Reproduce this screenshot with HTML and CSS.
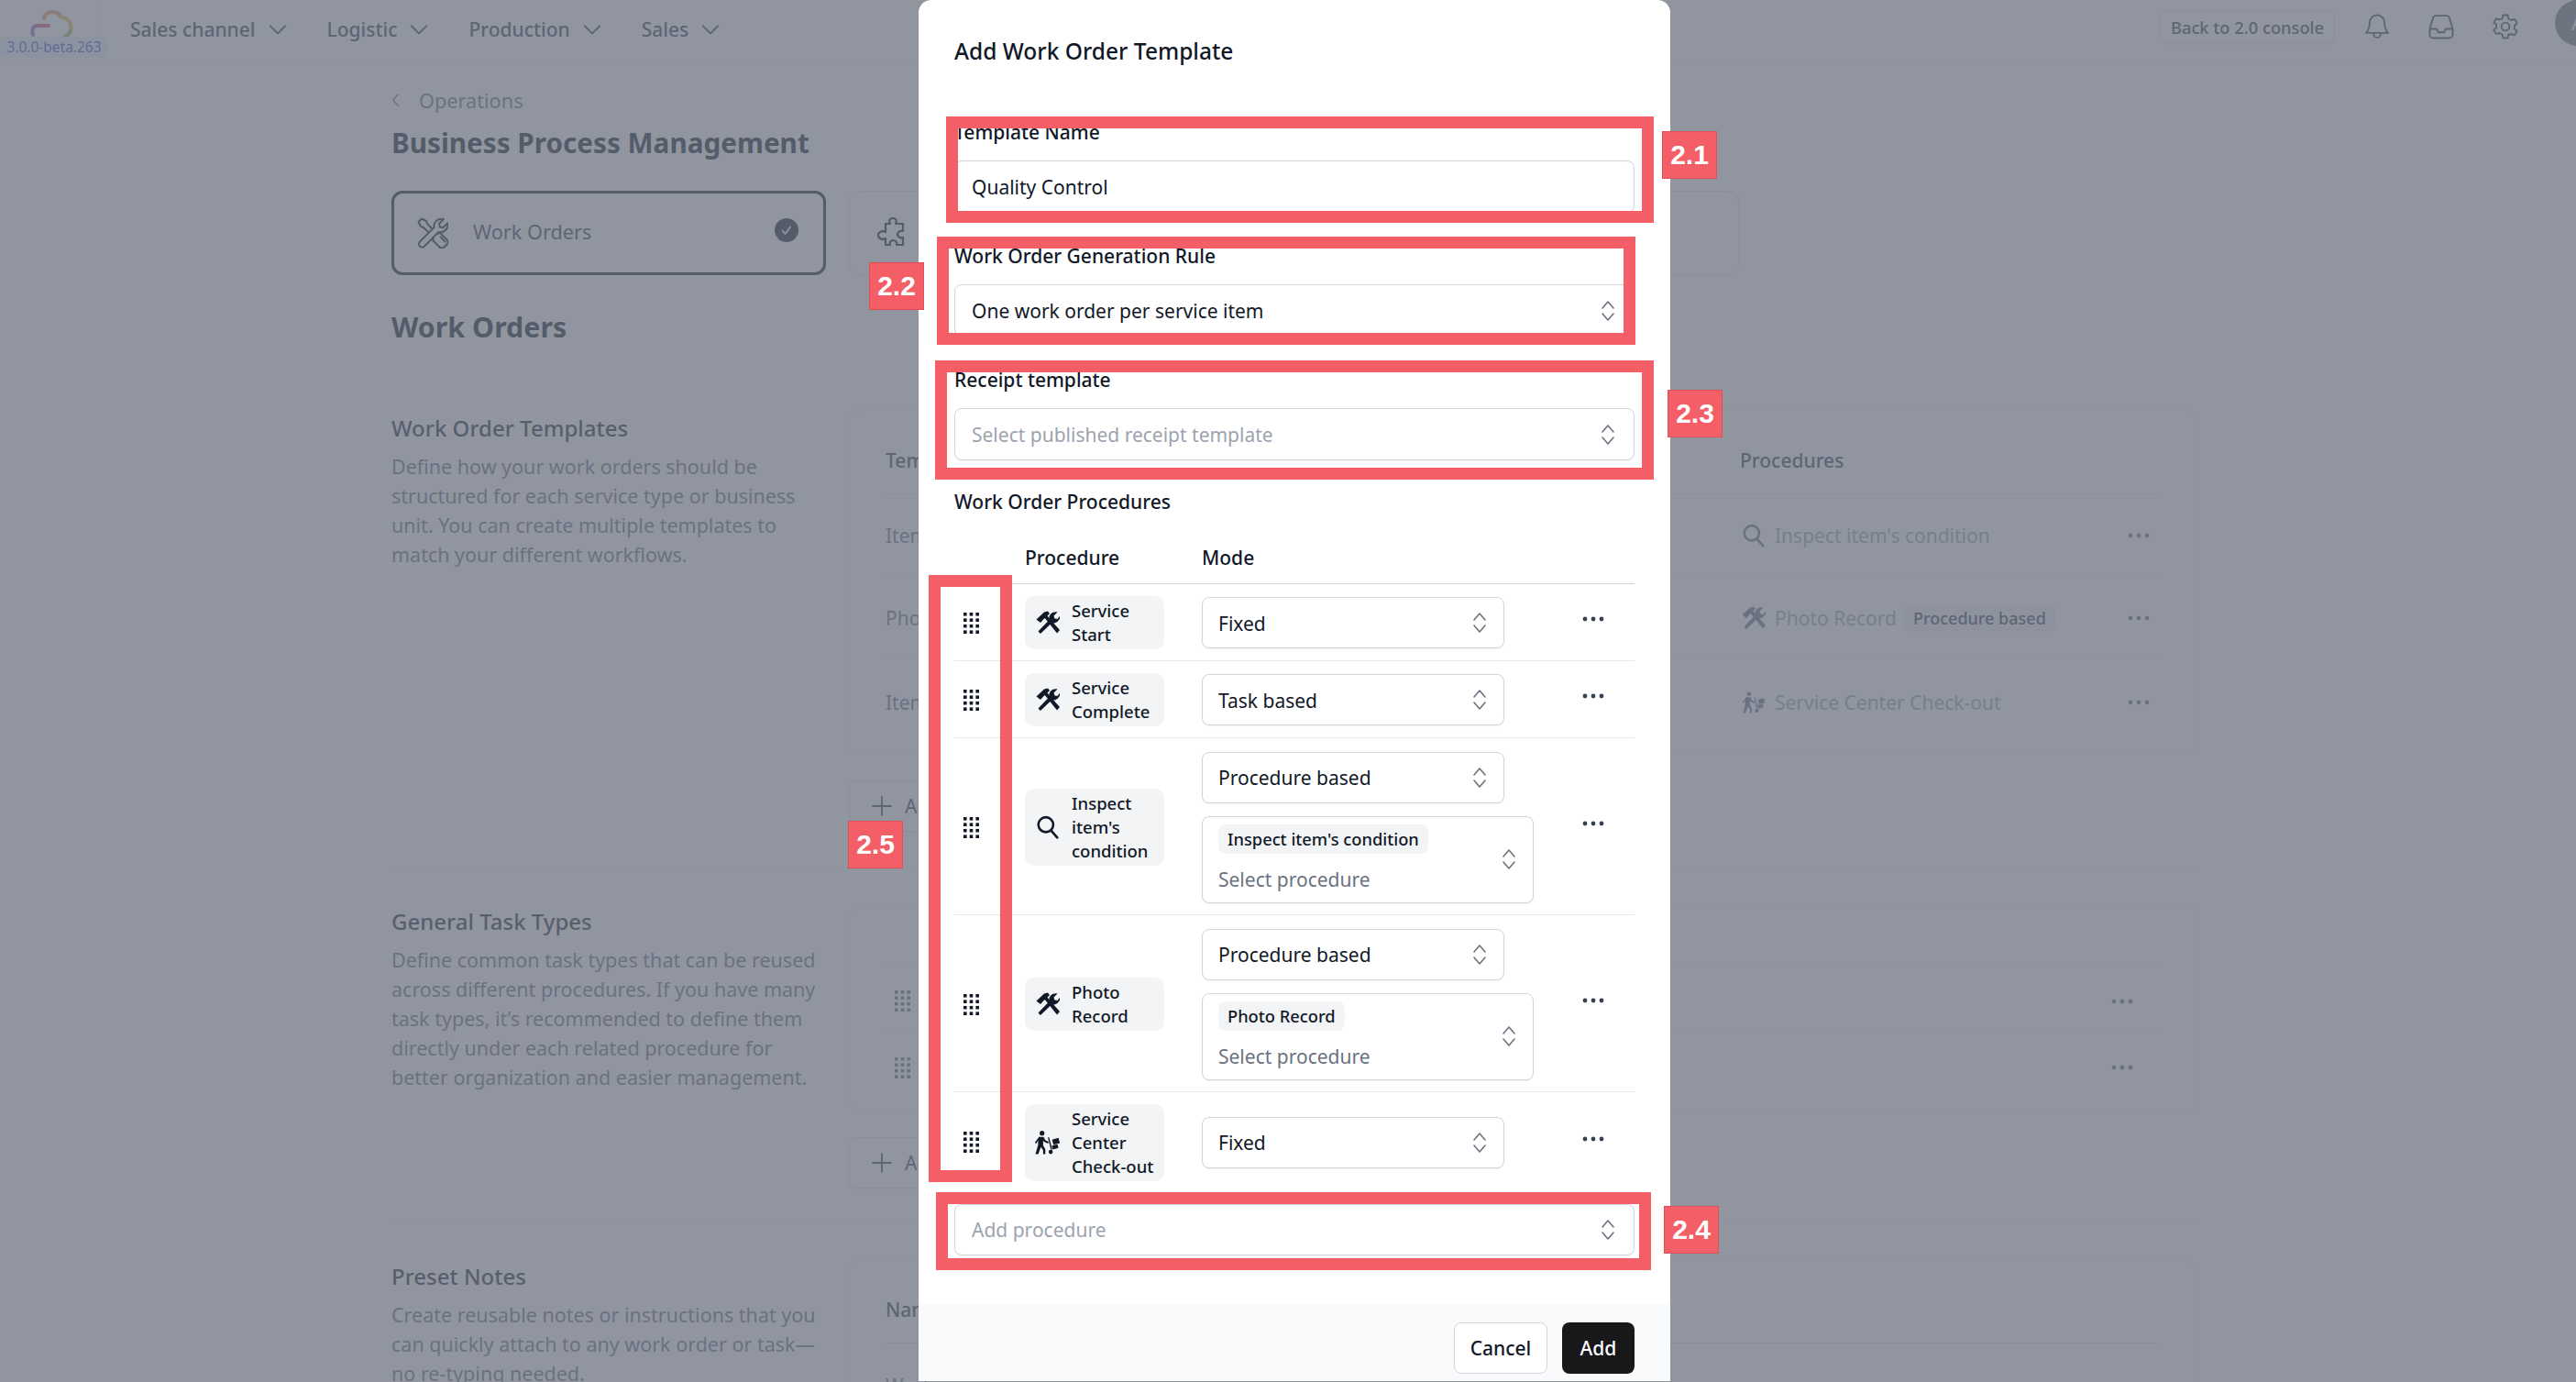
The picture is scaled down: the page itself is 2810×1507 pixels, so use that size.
FILE: index.html
```html
<!DOCTYPE html>
<html lang="en">
<head>
<meta charset="UTF-8">
<title>Add Work Order Template</title>
<link rel="stylesheet" href="styles.css">
</head>
<body>
<svg class="defs" width="0" height="0">
  <symbol id="updown" viewBox="0 0 16 24"><path d="M2 9 8 2l6 7M2 15l6 7 6-7" fill="none" stroke="#6b7280" stroke-width="1.6" stroke-linecap="round" stroke-linejoin="round"/></symbol>
  <symbol id="grip" viewBox="0 0 17 23"><g fill="currentColor"><rect x="0" y="0" width="3.6" height="3.6"/><rect x="6.7" y="0" width="3.6" height="3.6"/><rect x="13.4" y="0" width="3.6" height="3.6"/><rect x="0" y="6.4" width="3.6" height="3.6"/><rect x="6.7" y="6.4" width="3.6" height="3.6"/><rect x="13.4" y="6.4" width="3.6" height="3.6"/><rect x="0" y="12.9" width="3.6" height="3.6"/><rect x="6.7" y="12.9" width="3.6" height="3.6"/><rect x="13.4" y="12.9" width="3.6" height="3.6"/><rect x="0" y="19.4" width="3.6" height="3.6"/><rect x="6.7" y="19.4" width="3.6" height="3.6"/><rect x="13.4" y="19.4" width="3.6" height="3.6"/></g></symbol>
  <symbol id="dots" viewBox="0 0 24 6"><g fill="currentColor"><circle cx="3" cy="3" r="2.4"/><circle cx="12" cy="3" r="2.4"/><circle cx="21" cy="3" r="2.4"/></g></symbol>
  <symbol id="tools" viewBox="0 0 26 26"><g fill="currentColor"><path d="M.5 9.500 9 1.500 13 .5 15 3l-2.500 2.500L14 7.500 11.500 10l-2-2L5 13z"/><path d="M11 9.500 13.500 7 26 21l-3 3.500z"/><path d="M2.500 22.500 14.500 10C13.500 5 17.500.5 23.500 1.500l-4 4 1 3 3 .5 3-4C27 10.500 22 14.500 17 13.500L5 25z"/></g></symbol>
  <symbol id="search" viewBox="0 0 24 24"><path fill="none" stroke="currentColor" stroke-width="2.400" stroke-linecap="round" d="M15.500 15.500 21.500 22.500M17.500 9.500a7.500 7.500 0 1 1-15 0 7.500 7.500 0 0 1 15 0z"/></symbol>
  <symbol id="walker" viewBox="0 0 30 27"><g fill="currentColor"><circle cx="9" cy="2.800" r="2.700"/><path d="M5.500 7h5l2.500 4 3.500 1.500-.8 2-4.500-2-1-1.500v5.500l2.500 4.500v5.500h-2.500v-4.500l-2.500-3.500-3 8H1.500L4.500 16v-5l-2 3.500L.8 13.500z"/><path d="M15.500 7.500h1.500l3.500 13.500-1.500.5z"/><rect x="21" y="9" width="7.500" height="6" transform="rotate(-15 24.700 12)"/><rect x="20.500" y="16" width="6.500" height="4.500" transform="rotate(-15 23.700 18)"/><circle cx="18.800" cy="24" r="2.400"/></g></symbol>
  <symbol id="chev" viewBox="0 0 16 16"><path d="M2.500 5.500 8 11l5.500-5.500" fill="none" stroke="currentColor" stroke-width="1.200" stroke-linecap="round" stroke-linejoin="round"/></symbol>
  <symbol id="plus" viewBox="0 0 24 24"><path d="M12 2v20M2 12h20" stroke="currentColor" stroke-width="1.800" stroke-linecap="round"/></symbol>
</svg>

<div class="page">
  <header class="topbar">
    <div class="logo">
      <svg class="logo-cloud" viewBox="0 0 48 30" fill="none" stroke-width="4" stroke-linecap="round"><path d="M3 27C1 22 3 17 8 17" stroke="#8f6fc0"/><path d="M8 17H20" stroke="#e0567f"/><path d="M15 9C17 1 29-1 34 8" stroke="#e89a5a"/><path d="M34 8C42 8 46 16 44 22" stroke="#d9c050"/><path d="M44 22C43 26 41 28 38 29" stroke="#8fc46a"/></svg>
      <span class="version">3.0.0-beta.263</span>
    </div>
    <nav class="menu">
      <a>Sales channel <svg class="chev"><use href="#chev"/></svg></a>
      <a>Logistic <svg class="chev"><use href="#chev"/></svg></a>
      <a>Production <svg class="chev"><use href="#chev"/></svg></a>
      <a>Sales <svg class="chev"><use href="#chev"/></svg></a>
    </nav>
    <div class="top-right">
      <button class="console-btn">Back to 2.0 console</button>
      <svg class="top-icon" viewBox="0 0 24 24" fill="none" stroke="currentColor" stroke-width="1.500" stroke-linejoin="round"><path d="M12 2a6.500 6.500 0 0 0-6.500 6.500c0 5-1.500 7-3 9h19c-1.500-2-3-4-3-9A6.500 6.500 0 0 0 12 2z"/><path d="M9 17.500v1a3 3 0 0 0 6 0v-1"/></svg>
      <svg class="top-icon" viewBox="0 0 24 24" fill="none" stroke="currentColor" stroke-width="1.500" stroke-linejoin="round"><path d="M2 14v5a3 3 0 0 0 3 3h14a3 3 0 0 0 3-3v-5l-3-10a2.500 2.500 0 0 0-2-1.500H7A2.500 2.500 0 0 0 5 4z"/><path d="M2 14h6l1.500 3h5l1.500-3h6"/></svg>
      <svg class="top-icon gear" viewBox="0 0 24 24" fill="none" stroke="currentColor" stroke-width="1.500" stroke-linejoin="round"><path d="M10 2h4l.7 3 2.400 1.400 3-.9 2 3.500-2.200 2.100v2.800l2.200 2.100-2 3.500-3-.9L14.700 19 14 22h-4l-.7-3-2.400-1.400-3 .9-2-3.500 2.200-2.100v-2.800L1.900 8.500l2-3.500 3 .9L9.300 5z"/><circle cx="12" cy="12" r="3.500"/></svg>
      <div class="avatar">A</div>
    </div>
  </header>

  <main class="content">
    <div class="crumb"><svg class="crumb-back" viewBox="0 0 10 18"><path d="M8 2 2 9l6 7" fill="none" stroke="currentColor" stroke-width="1.500" stroke-linecap="round" stroke-linejoin="round"/></svg>Operations</div>
    <h1 class="page-title">Business Process Management</h1>

    <div class="cards">
      <div class="tab-card active">
        <svg class="tab-icon" viewBox="0 0 34 34" stroke="currentColor" stroke-width="2" stroke-linejoin="round" fill="#fff"><path d="M1.500 5 5 1.500l5 2.500 1 3L22 18l3-1 7.500 7.500a3.500 3.500 0 0 1 0 5l-3 3a3.500 3.500 0 0 1-5 0L17 25l1-3L7 11l-3-1z"/><path d="M25 21l6 6"/><path d="M3 26.500 18.500 11C17.500 5.500 22.500.5 29 2l-5 5 .8 3.500 3.500.8 5-5C34.500 12.500 29 17.500 23.500 16L8 31.500a3.500 3.500 0 0 1-5-5z"/></svg>
        <span class="tab-name">Work Orders</span>
        <span class="tab-check"><svg viewBox="0 0 16 16"><path d="M3.500 8.500 6.500 12 12 4.500" fill="none" stroke="#fff" stroke-width="1.800" stroke-linecap="round" stroke-linejoin="round"/></svg></span>
      </div>
      <div class="tab-card">
        <svg class="tab-icon" viewBox="0 0 34 34" fill="none" stroke="currentColor" stroke-width="2.200" stroke-linejoin="round"><path d="M9 7h5c-2-4 0-6 3-6s5 2 3 6h8v8c-3-1-6 1-6 3.500s3 4.500 6 3.500v8h-7c1-3-1-5-3.500-5s-4.500 2-3.500 5H9v-7c-4 2-8 0-8-3.500s4-5.500 8-3.500z"/></svg>
      </div>
      <div class="tab-card"></div>
    </div>

    <h2 class="section-head">Work Orders</h2>

    <section class="setting first">
      <div class="setting-text">
        <h3>Work Order Templates</h3>
        <p>Define how your work orders should be structured for each service type or business unit. You can create multiple templates to match your different workflows.</p>
      </div>
      <div class="setting-body">
        <div class="panel templates">
          <div class="t-row t-head"><span>Template</span><span class="t-proc">Procedures</span></div>
          <div class="t-row"><span>Item</span><span class="t-proc"><svg class="t-icon"><use href="#search"/></svg><em>Inspect item's condition</em></span><svg class="t-dots"><use href="#dots"/></svg></div>
          <div class="t-row"><span>Photo</span><span class="t-proc"><svg class="t-icon"><use href="#tools"/></svg><em>Photo Record</em><b class="t-tag">Procedure based</b></span><svg class="t-dots"><use href="#dots"/></svg></div>
          <div class="t-row"><span>Item</span><span class="t-proc"><svg class="t-icon"><use href="#walker"/></svg><em>Service Center Check-out</em></span><svg class="t-dots"><use href="#dots"/></svg></div>
        </div>
        <button class="add-btn"><svg class="add-plus"><use href="#plus"/></svg>Add</button>
      </div>
    </section>

    <section class="setting second">
      <div class="setting-text">
        <h3>General Task Types</h3>
        <p>Define common task types that can be reused across different procedures. If you have many task types, it’s recommended to define them directly under each related procedure for better organization and easier management.</p>
      </div>
      <div class="setting-body">
        <div class="panel tasks">
          <div class="task-head"></div>
          <div class="task-row"><svg class="task-grip"><use href="#grip"/></svg><svg class="t-dots"><use href="#dots"/></svg></div>
          <div class="task-row"><svg class="task-grip"><use href="#grip"/></svg><svg class="t-dots"><use href="#dots"/></svg></div>
        </div>
        <button class="add-btn"><svg class="add-plus"><use href="#plus"/></svg>Add</button>
      </div>
    </section>

    <section class="setting">
      <div class="setting-text">
        <h3>Preset Notes</h3>
        <p>Create reusable notes or instructions that you can quickly attach to any work order or task—no re-typing needed.</p>
      </div>
      <div class="setting-body">
        <div class="panel notes">
          <div class="t-row t-head"><span>Name</span></div>
          <div class="t-row"><span>Wash</span></div>
        </div>
      </div>
    </section>
  </main>
</div>

<div class="overlay"></div>

<div class="modal">
  <h2 class="modal-title">Add Work Order Template</h2>
  <div class="modal-body">
    <div class="field">
      <label>Template Name</label>
      <div class="control">Quality Control</div>
    </div>
    <div class="field">
      <label>Work Order Generation Rule</label>
      <div class="control">One work order per service item<svg class="updown"><use href="#updown"/></svg></div>
    </div>
    <div class="field">
      <label>Receipt template</label>
      <div class="control placeholder">Select published receipt template<svg class="updown"><use href="#updown"/></svg></div>
    </div>

    <div class="proc-title">Work Order Procedures</div>
    <div class="proc-head"><span>Procedure</span><span>Mode</span></div>

    <div class="proc-row">
      <svg class="grip"><use href="#grip"/></svg>
      <div class="chip"><svg class="chip-icon"><use href="#tools"/></svg><span>Service Start</span></div>
      <div class="modes"><div class="control mode">Fixed<svg class="updown"><use href="#updown"/></svg></div></div>
      <svg class="more"><use href="#dots"/></svg>
    </div>
    <div class="proc-row">
      <svg class="grip"><use href="#grip"/></svg>
      <div class="chip"><svg class="chip-icon"><use href="#tools"/></svg><span>Service Complete</span></div>
      <div class="modes"><div class="control mode">Task based<svg class="updown"><use href="#updown"/></svg></div></div>
      <svg class="more"><use href="#dots"/></svg>
    </div>
    <div class="proc-row tall">
      <svg class="grip"><use href="#grip"/></svg>
      <div class="chip"><svg class="chip-icon"><use href="#search"/></svg><span>Inspect item's condition</span></div>
      <div class="modes">
        <div class="control mode">Procedure based<svg class="updown"><use href="#updown"/></svg></div>
        <div class="control multi"><div class="multi-list"><span class="tag">Inspect item's condition</span><span class="multi-hint">Select procedure</span></div><svg class="updown"><use href="#updown"/></svg></div>
      </div>
      <svg class="more"><use href="#dots"/></svg>
    </div>
    <div class="proc-row tall">
      <svg class="grip"><use href="#grip"/></svg>
      <div class="chip"><svg class="chip-icon"><use href="#tools"/></svg><span>Photo Record</span></div>
      <div class="modes">
        <div class="control mode">Procedure based<svg class="updown"><use href="#updown"/></svg></div>
        <div class="control multi"><div class="multi-list"><span class="tag">Photo Record</span><span class="multi-hint">Select procedure</span></div><svg class="updown"><use href="#updown"/></svg></div>
      </div>
      <svg class="more"><use href="#dots"/></svg>
    </div>
    <div class="proc-row last">
      <svg class="grip"><use href="#grip"/></svg>
      <div class="chip"><svg class="chip-icon wide"><use href="#walker"/></svg><span>Service Center Check-out</span></div>
      <div class="modes"><div class="control mode">Fixed<svg class="updown"><use href="#updown"/></svg></div></div>
      <svg class="more"><use href="#dots"/></svg>
    </div>

    <div class="control placeholder add-proc">Add procedure<svg class="updown"><use href="#updown"/></svg></div>
  </div>
  <div class="modal-foot">
    <button class="btn-cancel">Cancel</button>
    <button class="btn-add">Add</button>
  </div>
</div>

<!-- annotations drawn on the screenshot -->
<div class="mark m21"></div>
<div class="mark m22"></div>
<div class="mark m23"></div>
<div class="mark m24"></div>
<div class="mark m25"></div>
<div class="badge b21">2.1</div>
<div class="badge b22">2.2</div>
<div class="badge b23">2.3</div>
<div class="badge b24">2.4</div>
<div class="badge b25">2.5</div>
</body>
</html>
```

FILE: styles.css
```css
* {
  box-sizing: border-box;
}
html, body {
  margin: 0;
  height: 1507px;
  overflow: hidden;
}
body {
  font-family: "Noto Sans", "Open Sans", sans-serif;
  font-size: 21px;
  color: #111827;
  background: #fff;
  position: relative;
}
.defs {
  position: absolute;
}
button {
  font-family: inherit;
}

/* page behind the dialog */
.topbar {
  height: 68px;
  border-bottom: 1px solid #f3f4f6;
  display: flex;
  align-items: center;
  color: #374151;
}
.logo {
  width: 110px;
  height: 67px;
  border-right: 1px solid #f3f4f6;
  position: relative;
  flex: none;
}
.logo-cloud {
  position: absolute;
  left: 33px;
  top: 11px;
  width: 48px;
  height: 30px;
}
.version {
  position: absolute;
  left: 0;
  top: 40px;
  width: 118px;
  height: 23px;
  border-radius: 6px;
  background: #eff6ff;
  color: #3b5bdb;
  font-size: 15.5px;
  line-height: 23px;
  text-align: center;
}
.menu {
  display: flex;
  gap: 42px;
  margin: -3px 0 0 32px;
}
.menu a {
  display: flex;
  align-items: center;
  gap: 12px;
  font-weight: 500;
}
.chev {
  width: 24px;
  height: 24px;
}
.top-right {
  margin-left: auto;
  display: flex;
  align-items: center;
  height: 67px;
  padding-bottom: 9px;
}
.console-btn {
  width: 191px;
  height: 36px;
  margin-right: 31px;
  border: 1px solid #e5e7eb;
  border-radius: 6px;
  background: #fff;
  color: #374151;
  font-size: 18.3px;
  font-weight: 500;
  padding: 0;
  box-shadow: 0 1px 2px rgba(0, 0, 0, 0.05);
}
.top-icon {
  width: 30px;
  height: 30px;
  margin-right: 40px;
}
.top-icon.gear {
  margin-right: 39px;
}
.avatar {
  width: 50px;
  height: 50px;
  margin: -9px -27px 0 0;
  border-radius: 50%;
  background: #78787f;
  color: #fff;
  text-align: center;
  line-height: 50px;
}

.content {
  padding-left: 427px;
  width: 2397px;
}
.crumb {
  display: flex;
  align-items: center;
  gap: 21px;
  height: 32px;
  margin-top: 25px;
  color: #6b7280;
  font-size: 21.7px;
}
.crumb-back {
  width: 9px;
  height: 18px;
}
.page-title {
  margin: 10px 0 0;
  font-size: 29.7px;
  line-height: 42px;
  font-weight: 700;
  color: #111827;
}
.cards {
  display: flex;
  gap: 25px;
  margin-top: 31px;
}
.tab-card {
  width: 473px;
  height: 92px;
  border: 1px solid #e5e7eb;
  border-radius: 12px;
  background: #fff;
  display: flex;
  align-items: center;
  padding: 0 30px;
  color: #111827;
}
.tab-card.active {
  width: 474px;
  border: 3px solid #111827;
  padding: 0 27px 0 25px;
}
.tab-icon {
  width: 34px;
  height: 34px;
}
.tab-name {
  margin: -3px 0 0 27px;
  font-size: 21.7px;
  color: #374151;
}
.tab-check {
  margin: -6px 0 0 auto;
  width: 26px;
  height: 26px;
  border-radius: 50%;
  background: #111827;
  display: flex;
  align-items: center;
  justify-content: center;
}
.tab-check svg {
  width: 16px;
  height: 16px;
}
.section-head {
  margin: 36px 0 0;
  font-size: 30.4px;
  line-height: 42px;
  font-weight: 700;
}
.setting {
  display: grid;
  grid-template-columns: 473px 1fr;
  column-gap: 26px;
  padding: 42px 0 39px;
  border-top: 1px solid #f3f4f6;
}
.setting.first {
  border-top: 0;
  padding-top: 73px;
}
.setting.second {
  padding-bottom: 37px;
}
.setting h3 {
  margin: -2px 0 0;
  font-size: 24px;
  line-height: 36px;
  font-weight: 500;
  color: #1f2937;
}
.setting p {
  margin: 8px 0 0;
  font-size: 21.5px;
  line-height: 32px;
  color: #6b7280;
}
.panel {
  border: 1px solid #f3f4f6;
  border-radius: 12px;
  padding: 0 39px;
  background: #fff;
  margin-top: -3px;
}
.setting.first .panel {
  margin-top: -4px;
}
.t-row {
  display: grid;
  grid-template-columns: 932px 1fr auto;
  height: 90.5px;
  align-items: center;
  border-bottom: 1px solid #f3f4f6;
  color: #6b7280;
}
.t-row:last-child {
  border-bottom: 0;
  height: 102px;
  padding-bottom: 10px;
}
.t-row.t-head {
  color: #374151;
  font-weight: 500;
  height: 91px;
  padding-top: 18px;
  border-bottom-color: #e5e7eb;
}
.t-proc {
  display: flex;
  align-items: center;
  font-weight: 500;
}
.t-proc em {
  font-style: normal;
  font-weight: 400;
  color: #9ca3af;
}
.t-icon {
  width: 26px;
  height: 26px;
  margin: 0 10px 0 2px;
  color: #6b7280;
}
.t-tag {
  margin-left: 8px;
  padding: 0 10px;
  height: 30px;
  line-height: 30px;
  border-radius: 6px;
  background: #f3f4f6;
  font-size: 18px;
  font-weight: 500;
  color: #374151;
}
.t-dots {
  width: 24px;
  height: 6px;
  margin-right: 12px;
  color: #6b7280;
}
.add-btn {
  display: flex;
  align-items: center;
  gap: 13px;
  width: 180px;
  height: 56px;
  margin-top: 28px;
  padding: 0 23px;
  border: 1px solid #e5e7eb;
  border-radius: 8px;
  background: #fff;
  color: #374151;
  font-size: 21px;
  box-shadow: 0 1px 2px rgba(0, 0, 0, 0.05);
}
.add-plus {
  width: 24px;
  height: 24px;
}
.tasks {
  height: 226px;
  display: flex;
  flex-direction: column;
}
.task-head {
  height: 69px;
  border-bottom: 1px solid #f3f4f6;
}
.task-row {
  height: 72px;
  display: flex;
  align-items: center;
  justify-content: space-between;
  padding: 0 18px 0 10px;
  border-bottom: 1px solid #f3f4f6;
  color: #6b7280;
}
.task-row:last-child {
  border-bottom: 0;
}
.task-grip {
  width: 17px;
  height: 23px;
}

/* dialog */
.overlay {
  position: absolute;
  inset: 0;
  background: rgba(107, 114, 128, 0.75);
}
.modal {
  position: absolute;
  left: 1002px;
  top: 0;
  width: 820px;
  height: 1506px;
  background: #fff;
  border-radius: 14px 14px 0 0;
  overflow: hidden;
}
.modal-title {
  margin: 0;
  padding: 38px 39px 0;
  font-size: 24.5px;
  line-height: 36px;
  font-weight: 500;
}
.modal-body {
  padding: 56px 39px 0;
}
.field {
  height: 135px;
  font-weight: 500;
}
.field label {
  display: block;
  height: 30px;
  line-height: 28px;
  margin-bottom: 15px;
}
.control {
  position: relative;
  display: flex;
  align-items: center;
  height: 57px;
  padding: 0 18px;
  border: 1px solid #d1d5db;
  border-radius: 8px;
  background: #fff;
  font-weight: 400;
  box-shadow: 0 1px 2px rgba(0, 0, 0, 0.05);
}
.placeholder {
  color: #9ca3af;
}
.updown {
  position: absolute;
  right: 20px;
  top: 50%;
  width: 16px;
  height: 24px;
  margin-top: -12px;
}
.proc-title {
  margin-top: -3px;
  height: 30px;
  line-height: 30px;
  font-weight: 500;
}
.proc-head {
  display: flex;
  height: 75px;
  padding: 31px 0 0 77px;
  line-height: 30px;
  font-weight: 500;
  border-bottom: 1px solid #d1d5db;
}
.proc-head span:first-child {
  width: 193px;
}
.proc-row {
  display: flex;
  align-items: center;
  padding: 13px 0 12px;
  border-bottom: 1px solid #e5e7eb;
}
.proc-row.tall {
  padding-top: 14.75px;
}
.proc-row.last {
  padding-top: 13px;
  border-bottom: 0;
  padding-bottom: 0;
}
.grip {
  width: 17px;
  height: 23px;
  margin-left: 10px;
  flex: none;
  color: #111827;
}
.chip {
  width: 152px;
  flex: none;
  margin: 0 41px 0 50px;
  padding: 3px 8px 3px 12px;
  display: flex;
  align-items: center;
  gap: 13px;
  border-radius: 10px;
  background: #f3f4f6;
  font-size: 18.5px;
  line-height: 26px;
  font-weight: 500;
}
.chip-icon {
  width: 26px;
  height: 26px;
  flex: none;
}
.chip-icon.wide {
  width: 29px;
  margin: 0 -1px 0 -2px;
}
.modes {
  width: 362px;
  flex: none;
  display: flex;
  flex-direction: column;
  gap: 14px;
}
.mode {
  width: 330px;
  height: 56px;
  padding: 1px 17px 0;
}
.mode .updown {
  right: 18px;
}
.multi {
  height: 95px;
  padding: 8px 17px 7px;
}
.multi .updown {
  right: 18px;
}
.multi-list {
  display: flex;
  flex-direction: column;
  align-items: flex-start;
  gap: 10px;
}
.tag {
  padding: 0 10px;
  height: 32px;
  line-height: 32px;
  border-radius: 8px;
  background: #f3f4f6;
  font-size: 18.3px;
  font-weight: 500;
}
.multi-hint {
  color: #6b7280;
  line-height: 36px;
}
.more {
  width: 24px;
  height: 6px;
  margin: -8px 0 0 53px;
  flex: none;
  color: #374151;
}
.add-proc {
  margin-top: 25.5px;
  height: 56px;
}
.modal-foot {
  position: absolute;
  left: 0;
  right: 0;
  bottom: 0;
  height: 84px;
  padding: 20px 39px 8px;
  display: flex;
  justify-content: flex-end;
  gap: 16px;
  background: #f9fafb;
}
.btn-cancel, .btn-add {
  height: 56px;
  border-radius: 8px;
  font-size: 21px;
  font-weight: 500;
  padding: 0;
}
.btn-cancel {
  width: 102px;
  border: 1px solid #d1d5db;
  background: #fff;
  color: #111827;
}
.btn-add {
  width: 79px;
  border: 0;
  background: #18181b;
  color: #fff;
}

/* red annotation marks */
.mark {
  position: absolute;
  border: 13px solid #f45f67;
}
.m21 { left: 1032px; top: 127px; width: 772px; height: 116px; }
.m22 { left: 1022px; top: 258px; width: 762px; height: 118px; }
.m23 { left: 1020px; top: 393px; width: 784px; height: 130px; }
.m24 { left: 1021px; top: 1300px; width: 780px; height: 85px; }
.m25 { left: 1013px; top: 627px; width: 91px; height: 662px; }
.badge {
  position: absolute;
  width: 60px;
  height: 52px;
  background: #f45f67;
  border: 1px solid #e04f57;
  color: #fff;
  font-family: "Liberation Sans", Arial, sans-serif;
  font-size: 30px;
  font-weight: 700;
  line-height: 50px;
  text-align: center;
}
.b21 { left: 1813px; top: 143px; }
.b22 { left: 948px; top: 286px; }
.b23 { left: 1819px; top: 425px; }
.b24 { left: 1815px; top: 1315px; }
.b25 { left: 925px; top: 895px; }
```
